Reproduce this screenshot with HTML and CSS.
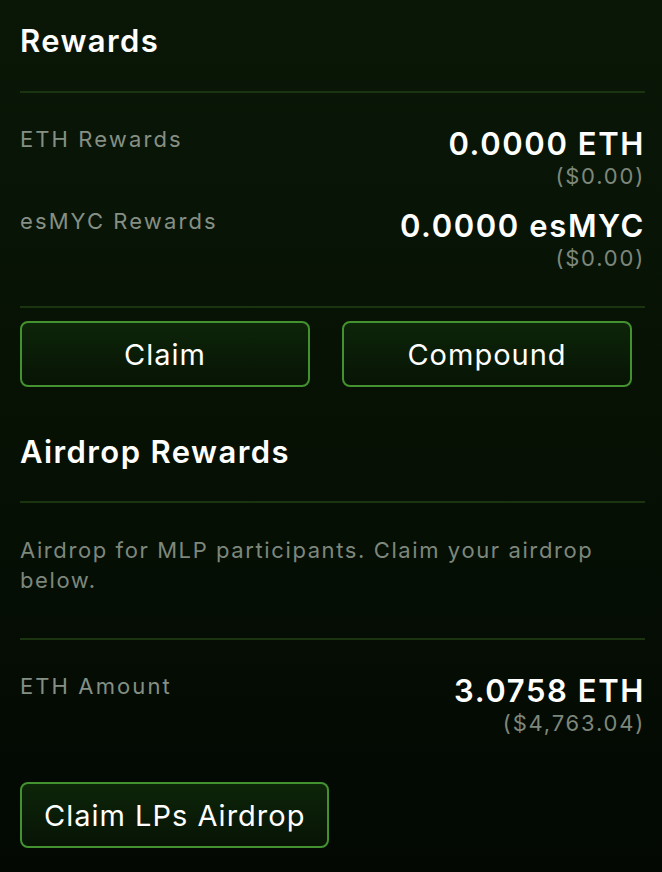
FILE: index.html
```html
<!DOCTYPE html>
<html lang="en">
<head>
  <meta charset="UTF-8">
  <meta name="viewport" content="width=device-width, initial-scale=1.0">
  <link rel="stylesheet" href="styles.css">
  <title>Rewards</title>
</head>
<body>

  <div id="wrap">

    <h2 class="title">Rewards</h2>
    <div class="line"></div>

    <div class="row first">
      <div class="label">ETH Rewards</div>
      <div class="value">
        <div class="amount">0.0000 ETH</div>
        <div class="usd">($0.00)</div>
      </div>
    </div>
    <div class="row">
      <div class="label">esMYC Rewards</div>
      <div class="value">
        <div class="amount">0.0000 esMYC</div>
        <div class="usd">($0.00)</div>
      </div>
    </div>

    <div class="line gap_top"></div>

    <div class="btn_row">
      <button class="btn">Claim</button>
      <button class="btn">Compound</button>
    </div>

    <h2 class="title airdrop">Airdrop Rewards</h2>
    <div class="line"></div>

    <p class="desc">Airdrop for MLP participants. Claim your airdrop below.</p>

    <div class="line"></div>

    <div class="row first">
      <div class="label">ETH Amount</div>
      <div class="value">
        <div class="amount">3.0758 ETH</div>
        <div class="usd">($4,763.04)</div>
      </div>
    </div>

    <button class="btn single">Claim LPs Airdrop</button>

  </div>

</body>
</html>
```

FILE: styles.css
```css
html, body {
  margin: 0;
  height: 100%;
}

body {
  background: linear-gradient(180deg, #0a1707 0%, #061104 50%, #030803 100%);
  font-family: Inter, "Noto Sans", sans-serif;
  color: #fff;
}

#wrap {
  padding: 23px 17px 0 20px;
}

.title {
  margin: 0 0 32px;
  font-size: 31px;
  line-height: 36px;
  font-weight: 600;
  letter-spacing: 1.4px;
}

.title.airdrop {
  margin: 47px 0 31px;
}

.line {
  height: 2px;
  background: #1a3410;
}

.line.gap_top {
  margin-top: 34px;
}

.row {
  display: flex;
  justify-content: space-between;
  align-items: flex-start;
  margin-top: 18px;
}

.row.first {
  margin-top: 33px;
}

.label {
  font-size: 22px;
  line-height: 26px;
  letter-spacing: 2.1px;
  color: #858f84;
}

.value {
  text-align: right;
}

.amount {
  font-size: 31px;
  line-height: 36px;
  font-weight: 600;
  letter-spacing: 1.6px;
}

.usd {
  font-size: 22px;
  line-height: 28px;
  letter-spacing: 1.8px;
  color: #7d877c;
}

.btn_row {
  display: grid;
  grid-template-columns: 290px 290px;
  gap: 32px;
  margin-top: 13px;
}

.btn {
  height: 66px;
  border: 2px solid #43922f;
  border-radius: 8px;
  background: linear-gradient(180deg, #0d2509 0%, #071405 100%);
  color: #fff;
  font-family: Inter, "Noto Sans", sans-serif;
  font-size: 29px;
  letter-spacing: 1px;
  padding: 0 22px;
}

.btn.single {
  margin-top: 45px;
}

.desc {
  margin: 32px 0 43px;
  font-size: 22px;
  line-height: 30px;
  letter-spacing: 1.6px;
  color: #7d877c;
}
```
